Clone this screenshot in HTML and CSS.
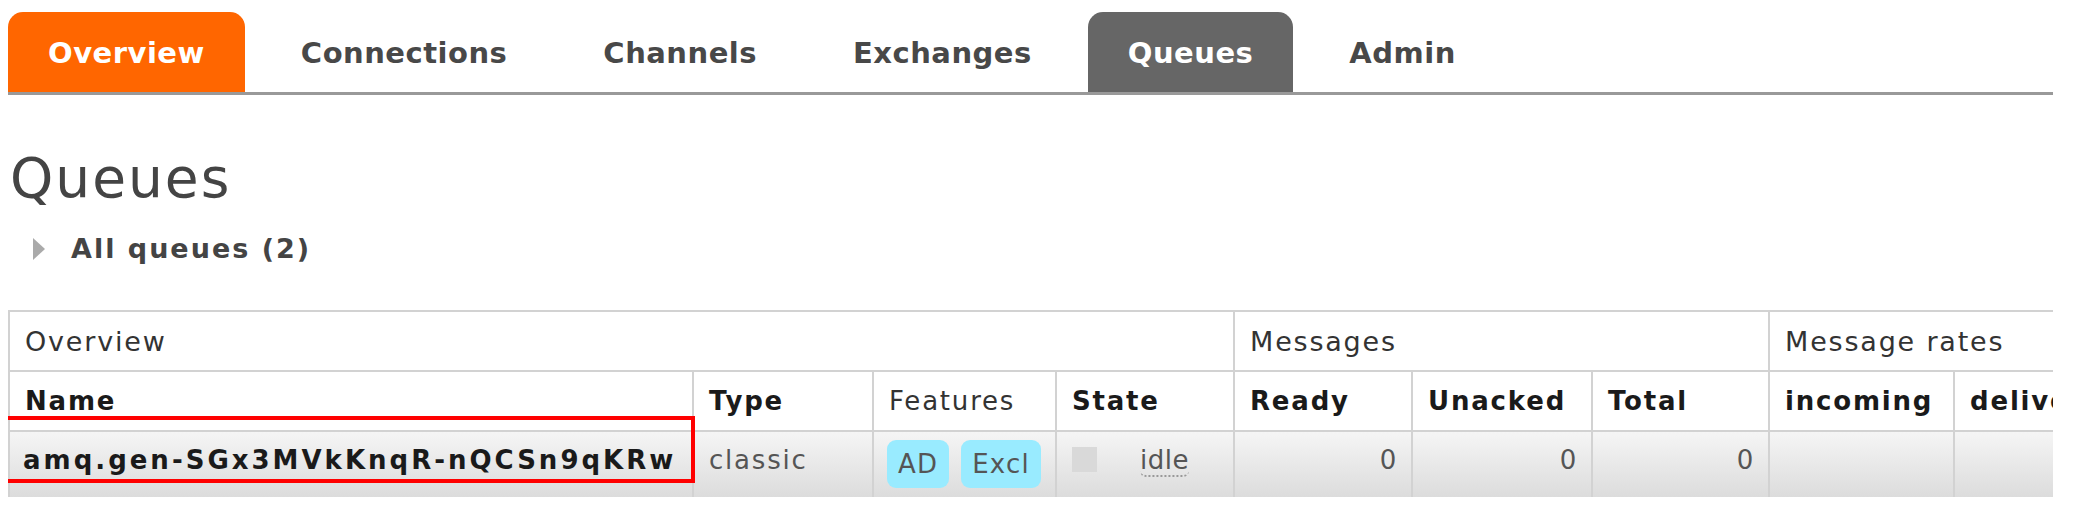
FILE: index.html
```html
<!DOCTYPE html>
<html lang="en">
<head>
<meta charset="utf-8">
<title>Queues</title>
<link rel="stylesheet" href="styles.css">
</head>
<body>
<div class="page">
  <ul class="menu">
    <li><a class="tab tab-orange">Overview</a></li>
    <li><a class="tab">Connections</a></li>
    <li><a class="tab">Channels</a></li>
    <li><a class="tab">Exchanges</a></li>
    <li><a class="tab tab-grey">Queues</a></li>
    <li><a class="tab">Admin</a></li>
  </ul>

  <h1 class="title">Queues</h1>
  <div class="toggle"><span class="tri"></span><span class="toggle-label">All queues (2)</span></div>

  <div class="table-area">
    <div class="clip">
      <table class="list">
        <colgroup>
          <col class="c-name"><col class="c-type"><col class="c-feat"><col class="c-state">
          <col class="c-num"><col class="c-num2"><col class="c-num3"><col class="c-rate"><col class="c-rate2">
        </colgroup>
        <tr class="group-row">
          <th colspan="4">Overview</th>
          <th colspan="3">Messages</th>
          <th colspan="2">Message rates</th>
        </tr>
        <tr class="head-row">
          <th>Name</th>
          <th>Type</th>
          <th class="plain">Features</th>
          <th>State</th>
          <th>Ready</th>
          <th>Unacked</th>
          <th>Total</th>
          <th>incoming</th>
          <th>deliver / get</th>
        </tr>
        <tr class="data-row">
          <td class="name">amq.gen-SGx3MVkKnqR-nQCSn9qKRw</td>
          <td>classic</td>
          <td><span class="badge">AD</span><span class="badge">Excl</span></td>
          <td><span class="key"></span><abbr class="state">idle</abbr></td>
          <td class="num">0</td>
          <td class="num">0</td>
          <td class="num">0</td>
          <td></td>
          <td></td>
        </tr>
      </table>
    </div>
    <div class="highlight"></div>
    <svg class="watermark" width="400" height="24" viewBox="0 0 400 24" aria-hidden="true">
      <path d="M108 24 L138 0 L172 0 L142 24 Z" fill="#c4ebe1"/>
      <path d="M280 0 L312 0 L346 24 L314 24 Z" fill="#c4ebe1"/>
      <path d="M58 24 Q72 8 96 1 L102 8 Q84 14 78 24 Z" fill="#c4ebe1"/>
    </svg>
  </div>
</div>
</body>
</html>
```

FILE: styles.css
```css
body {
  margin: 8px;
  background: #fff;
  font-family: "DejaVu Sans", Verdana, sans-serif;
  color: #444;
}

.page {
  width: 2045px;
}

/* ---------- tab menu ---------- */
.menu {
  display: flex;
  gap: 16px;
  margin: 4px 0 0;
  padding: 0;
  list-style: none;
  border-bottom: 3px solid #999;
}

.tab {
  display: block;
  padding: 2px 40px 0;
  line-height: 78px;
  font-size: 29px;
  font-weight: bold;
  letter-spacing: 0.5px;
  color: #484848;
  text-decoration: none;
  border-radius: 15px 15px 0 0;
}

.tab-orange {
  background: #f60;
  color: #fff;
}

.tab-grey {
  background: #666;
  color: #fff;
}

/* ---------- heading ---------- */
.title {
  margin: 55px 0 0 2px;
  font-size: 55px;
  line-height: 56px;
  font-weight: normal;
  letter-spacing: 2px;
  color: #444;
}

.toggle {
  display: flex;
  align-items: center;
  gap: 26px;
  margin-top: 28px;
  padding-left: 25px;
  height: 30px;
}

.tri {
  width: 0;
  height: 0;
  border-left: 12px solid #aaa;
  border-top: 11px solid transparent;
  border-bottom: 11px solid transparent;
}

.toggle-label {
  font-size: 27px;
  font-weight: bold;
  letter-spacing: 2px;
  line-height: 30px;
  color: #444;
}

/* ---------- table ---------- */
.table-area {
  position: relative;
  margin-top: 46px;
}

.clip {
  width: 2045px;
  overflow: hidden;
}

.list {
  width: 2125px;
  table-layout: fixed;
  border-collapse: collapse;
  letter-spacing: 1.8px;
}

.c-name { width: 684px; }
.c-type { width: 180px; }
.c-feat { width: 183px; }
.c-state { width: 178px; }
.c-num { width: 178px; }
.c-num2 { width: 180px; }
.c-num3 { width: 177px; }
.c-rate { width: 185px; }
.c-rate2 { width: 180px; }

.list th,
.list td {
  border: 2px solid #d2d2d2;
  padding: 0 15px;
  text-align: left;
  white-space: nowrap;
  overflow: hidden;
}

.group-row th {
  height: 58px;
  font-size: 27px;
  font-weight: normal;
  color: #333;
  vertical-align: middle;
}

.head-row th {
  height: 58px;
  font-size: 26px;
  font-weight: bold;
  color: #1a1a1a;
  vertical-align: middle;
}

.head-row th.plain {
  font-weight: normal;
  color: #333;
}

.data-row td {
  height: 57px;
  padding-top: 8px;
  vertical-align: top;
  font-size: 26px;
  line-height: 40px;
  color: #555;
  background: linear-gradient(#f5f5f5, #dcdcdc);
  border-bottom: none;
}

.data-row td.name {
  padding-left: 13px;
  font-weight: bold;
  letter-spacing: 3px;
  color: #1a1a1a;
}

.data-row td.num {
  text-align: right;
  padding-right: 13px;
}

.badge {
  display: inline-block;
  height: 48px;
  line-height: 48px;
  padding: 0 11px;
  margin-right: 14px;
  margin-left: -2px;
  border-radius: 9px;
  background: #99ebff;
  color: #555;
  letter-spacing: 1.2px;
}

.key {
  display: inline-block;
  width: 25px;
  height: 25px;
  margin-right: 43px;
  vertical-align: -3px;
  background: #d9d9d9;
}

.state {
  text-decoration: none;
  border-bottom: 2px dotted #999;
  border-radius: 0 0 6px 6px;
  letter-spacing: 0.5px;
}

/* red annotation box over the first row */
.highlight {
  position: absolute;
  left: -7px;
  top: 106px;
  width: 686px;
  height: 59px;
  border: 4px solid #f00;
}

/* faint watermark fragment peeking in at the bottom edge */
.watermark {
  position: absolute;
  z-index: 1;
  display: block;
  left: 600px;
  top: 188px;
}
```
